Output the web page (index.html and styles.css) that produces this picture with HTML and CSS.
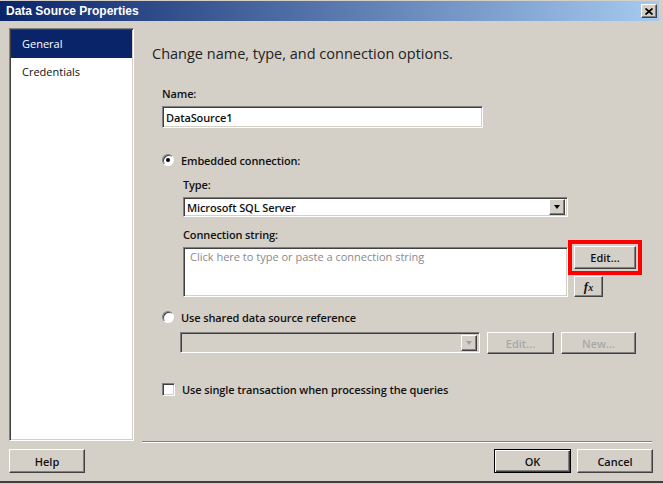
FILE: index.html
```html
<!DOCTYPE html>
<html lang="en">
<head>
    <meta charset="UTF-8">
    <title>Data Source Properties</title>
    <link rel="stylesheet" href="styles.css">
</head>
<body>
<div class="window">
    <div class="titlebar">
        <span class="title">Data Source Properties</span>
        <button class="close-btn">
            <svg width="8" height="7" viewBox="0 0 8 7"><path d="M0.5 0.5L7.5 6.5M7.5 0.5L0.5 6.5" stroke="#000" stroke-width="1.7"/></svg>
        </button>
    </div>

    <div class="main">
        <ul class="sidebar">
            <li class="selected">General</li>
            <li>Credentials</li>
        </ul>

        <div class="content">
            <h2>Change name, type, and connection options.</h2>

            <div class="form">
                <div class="field-label">Name:</div>
                <input class="textbox name-box" type="text" value="DataSource1">

                <div class="option embedded"><span class="radio checked"></span>Embedded connection:</div>

                <div class="sub">
                    <div class="field-label">Type:</div>
                    <div class="combo type-combo">
                        <span class="combo-text">Microsoft SQL Server</span>
                        <span class="combo-btn"><i class="arrow"></i></span>
                    </div>

                    <div class="field-label">Connection string:</div>
                    <div class="conn-row">
                        <textarea class="textbox conn-box" placeholder="Click here to type or paste a connection string"></textarea>
                        <div class="conn-buttons">
                            <button class="btn edit-btn highlighted">Edit...</button>
                            <button class="btn fx-btn"><i>f</i><i class="x">x</i></button>
                        </div>
                    </div>
                </div>

                <div class="option shared"><span class="radio"></span>Use shared data source reference</div>

                <div class="shared-row">
                    <div class="combo shared-combo disabled">
                        <span class="combo-text"></span>
                        <span class="combo-btn"><i class="arrow"></i></span>
                    </div>
                    <button class="btn shared-edit" disabled>Edit...</button>
                    <button class="btn shared-new" disabled>New...</button>
                </div>

                <div class="option check-row"><span class="checkbox"></span>Use single transaction when processing the queries</div>
            </div>

            <div class="separator"></div>
        </div>
    </div>

    <div class="footer">
        <button class="btn help-btn">Help</button>
        <div class="footer-right">
            <button class="btn ok-btn">OK</button>
            <button class="btn cancel-btn">Cancel</button>
        </div>
    </div>
</div>
</body>
</html>
```

FILE: styles.css
```css
*, *::before, *::after {
    box-sizing: border-box;
}

body {
    margin: 0;
    background-color: #d4d0c8;
    font-family: "Open Sans", "Noto Sans", sans-serif;
    font-size: 11px;
    color: #111;
}

.window {
    height: 483px;
    padding: 1px 4px 0 0;
    border-bottom: 2px solid #404040;
    display: flex;
    flex-direction: column;
}

/* title bar */

.titlebar {
    height: 20px;
    flex: none;
    background: linear-gradient(to right, #0a246a, #a6caf0);
    display: flex;
    align-items: center;
    justify-content: space-between;
    padding: 0 2px 0 6px;
}

.title {
    color: #fff;
    font-family: "Liberation Sans", Arial, sans-serif;
    font-weight: bold;
    font-size: 12px;
}

.close-btn {
    width: 16px;
    height: 14px;
    padding: 0;
    background-color: #d4d0c8;
    border: 1px solid;
    border-color: #fff #404040 #404040 #fff;
    box-shadow: inset -1px -1px #808080;
    display: flex;
    align-items: center;
    justify-content: center;
}

/* main area */

.main {
    height: 422px;
    flex: none;
    display: flex;
}

.sidebar {
    list-style: none;
    margin: 7px 0 2px 9px;
    width: 125px;
    background-color: #fff;
    border: 1px solid;
    border-color: #808080 #fff #fff #808080;
    box-shadow: inset 1px 1px #404040, inset -1px -1px #d4d0c8;
    padding: 1px 1px 0 1px;
}

.sidebar li {
    height: 28px;
    line-height: 28px;
    padding-left: 11px;
    font-size: 11px;
}

.sidebar li.selected {
    background-color: #0a246a;
    color: #fff;
}

.content {
    flex: 1;
    display: flex;
    flex-direction: column;
    padding-left: 17px;
}

.content h2 {
    margin: 23px 0 0 1px;
    font-size: 14.5px;
    line-height: 20px;
    font-weight: normal;
    color: #222;
}

.form {
    padding-left: 11px;
    font-weight: 600;
    letter-spacing: -0.12px;
}

.field-label {
    line-height: 14px;
    margin-top: 23px;
    margin-bottom: 5px;
}

.sub .field-label {
    margin-top: 11px;
}

.textbox {
    display: block;
    background-color: #fff;
    border: 1px solid;
    border-color: #808080 #fff #fff #808080;
    box-shadow: inset 1px 1px #404040, inset -1px -1px #d4d0c8;
    font-family: inherit;
    font-size: 11px;
    color: #111;
    outline: none;
}

.name-box {
    width: 321px;
    height: 22px;
    padding: 0 3px;
    font-weight: 600;
    letter-spacing: -0.12px;
}

.option {
    display: flex;
    align-items: center;
    height: 14px;
}

.embedded {
    margin-top: 25px;
}

.shared {
    margin-top: 13px;
}

.check-row {
    margin-top: 28px;
}

.radio {
    width: 12px;
    height: 12px;
    margin-right: 7px;
    border-radius: 50%;
    background-color: #fff;
    border: 1px solid;
    border-color: #808080 #fff #fff #808080;
    box-shadow: inset 1px 1px #404040;
    display: flex;
    align-items: center;
    justify-content: center;
}

.radio.checked::after {
    content: "";
    width: 4px;
    height: 4px;
    border-radius: 50%;
    background-color: #000;
}

.checkbox {
    width: 13px;
    height: 13px;
    margin-right: 7px;
    background-color: #fff;
    border: 1px solid;
    border-color: #808080 #fff #fff #808080;
    box-shadow: inset 1px 1px #404040, inset -1px -1px #d4d0c8;
}

.sub {
    margin-left: 21px;
}

.combo {
    display: flex;
    align-items: center;
    justify-content: space-between;
    height: 20px;
    padding: 0 2px 0 3px;
    background-color: #fff;
    border: 1px solid;
    border-color: #808080 #fff #fff #808080;
    box-shadow: inset 1px 1px #404040, inset -1px -1px #d4d0c8;
}

.type-combo {
    width: 385px;
}

.combo-btn {
    width: 16px;
    height: 16px;
    background-color: #d4d0c8;
    border: 1px solid;
    border-color: #fff #404040 #404040 #fff;
    box-shadow: inset -1px -1px #808080;
    display: flex;
    align-items: center;
    justify-content: center;
}

.arrow {
    width: 0;
    height: 0;
    border-top: 4px solid #000;
    border-left: 3.5px solid transparent;
    border-right: 3.5px solid transparent;
}

.combo.disabled {
    background-color: #d4d0c8;
}

.combo.disabled .arrow {
    border-top-color: #a0a0a0;
}

.conn-row {
    display: flex;
    align-items: flex-start;
}

.conn-box {
    width: 385px;
    height: 50px;
    padding: 1px 6px;
    resize: none;
    font-weight: normal;
    letter-spacing: 0;
}

.conn-box::placeholder {
    color: #8a8a8a;
}

.conn-buttons {
    display: flex;
    flex-direction: column;
    gap: 7px;
    margin: -1px 0 0 6px;
}

.btn {
    padding: 0;
    background-color: #d4d0c8;
    color: #111;
    font-family: inherit;
    font-size: 11px;
    font-weight: 600;
    border: 1px solid;
    border-color: #fff #404040 #404040 #fff;
    box-shadow: inset -1px -1px #808080;
}

.btn:disabled {
    color: #a8a8a8;
}

.edit-btn {
    width: 62px;
    height: 23px;
}

.highlighted {
    outline: 4px solid #f00;
    outline-offset: 2px;
}

.fx-btn {
    width: 29px;
    height: 21px;
    font-family: "Liberation Serif", serif;
    font-size: 13px;
    font-weight: bold;
}

.fx-btn .x {
    font-size: 10px;
}

.shared-row {
    display: flex;
    gap: 7px;
    margin: 8px 0 0 18px;
}

.shared-combo {
    width: 300px;
    height: 21px;
}

.shared-edit {
    width: 67px;
    height: 22px;
}

.shared-new {
    width: 75px;
    height: 22px;
}

.separator {
    margin: auto 7px 0 -9px;
    height: 2px;
    border-top: 1px solid #808080;
    border-bottom: 1px solid #fff;
}

/* footer */

.footer {
    display: flex;
    justify-content: space-between;
    padding: 6px 6px 0 9px;
}

.footer-right {
    display: flex;
    gap: 6px;
}

.footer .btn {
    height: 24px;
}

.help-btn {
    width: 76px;
}

.ok-btn {
    width: 77px;
    border-color: #000;
    box-shadow: inset 1px 1px #fff, inset -1px -1px #404040, inset -2px -2px #808080;
}

.cancel-btn {
    width: 76px;
}
```
